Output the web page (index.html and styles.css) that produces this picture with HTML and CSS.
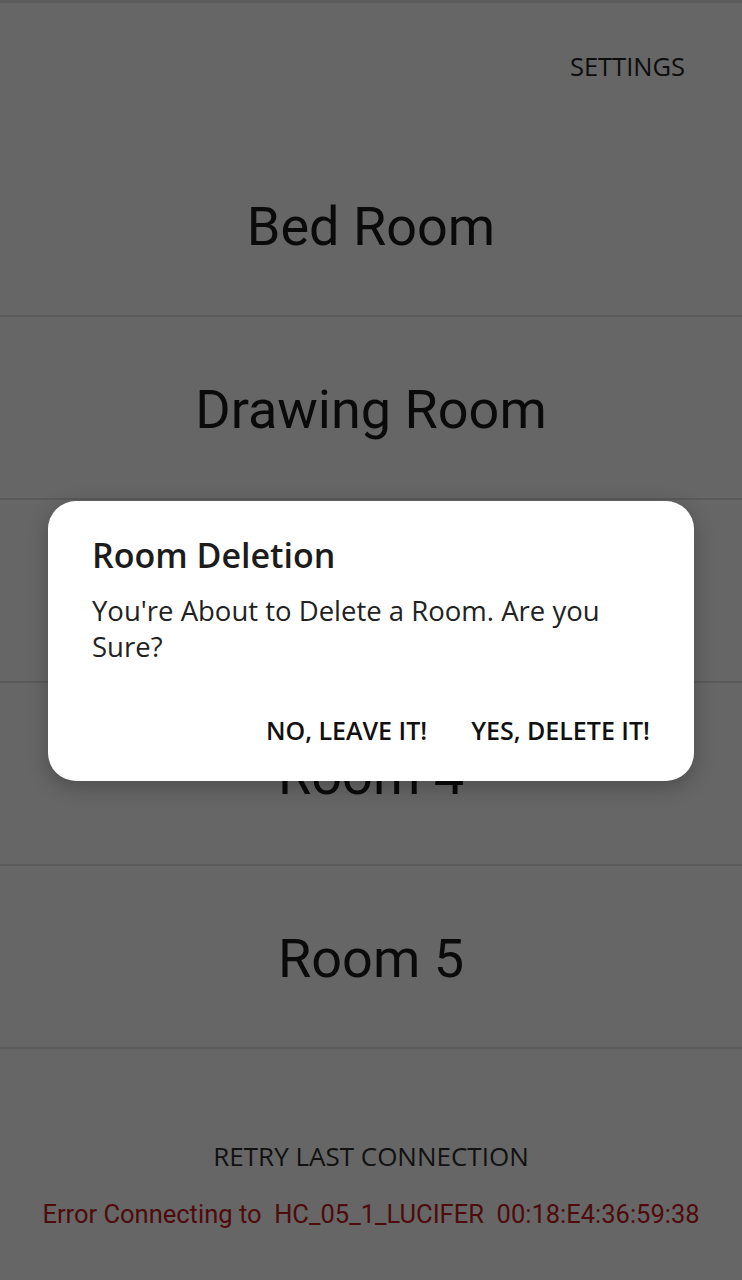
FILE: index.html
```html
<!DOCTYPE html>
<html>
<head>
<meta charset="utf-8">
<link rel="stylesheet" href="styles.css">
</head>
<body>
<div class="screen">
  <header class="top">
    <span class="settings">SETTINGS</span>
  </header>
  <ul class="rooms">
    <li class="room">Bed Room</li>
    <li class="room">Drawing Room</li>
    <li class="room">Room 3</li>
    <li class="room">Room 4</li>
    <li class="room">Room 5</li>
  </ul>
  <footer class="foot">
    <div class="retry">RETRY LAST CONNECTION</div>
    <div class="error">Error Connecting to&nbsp; HC_05_1_LUCIFER&nbsp; 00:18:E4:36:59:38</div>
  </footer>
  <div class="dialog">
    <h2 class="dlg-title">Room Deletion</h2>
    <p class="dlg-body">You're About to Delete a Room. Are you Sure?</p>
    <div class="dlg-actions">
      <span class="btn">NO, LEAVE IT!</span>
      <span class="btn">YES, DELETE IT!</span>
    </div>
  </div>
</div>
</body>
</html>
```
FILE: styles.css
```css
* { box-sizing: border-box; }
html, body { margin: 0; padding: 0; }
body {
  background: #666666;
  width: 742px;
  height: 1280px;
  overflow: hidden;
}
.screen {
  position: relative;
  width: 742px;
  height: 1280px;
  border-top: 3px solid #5d5d5d;
}
.top {
  height: 131px;
  display: flex;
  justify-content: flex-end;
  align-items: flex-start;
  padding: 48px 57px 0 0;
}
.settings {
  font-family: "Open Sans", sans-serif;
  font-size: 25.5px;
  font-weight: 400;
  color: #0d0d0d;
  line-height: 30px;
}
.rooms {
  list-style: none;
  margin: 0;
  padding: 0;
}
.room {
  height: 183px;
  border-bottom: 2px solid #5a5a5a;
  display: flex;
  align-items: center;
  justify-content: center;
  font-family: Roboto, sans-serif;
  font-size: 54px;
  color: #0a0a0a;
  padding-top: 3px;
}
.foot {
  display: flex;
  flex-direction: column;
  align-items: center;
  padding-top: 91px;
}
.retry {
  font-family: "Open Sans", sans-serif;
  font-size: 26px;
  font-weight: 400;
  color: #111;
  line-height: 32px;
}
.error {
  margin-top: 26px;
  font-family: Roboto, sans-serif;
  font-size: 25.5px;
  color: #4e0b0b;
  line-height: 32px;
  white-space: nowrap;
}
.dialog {
  position: absolute;
  left: 48px;
  top: 498px;
  width: 646px;
  height: 280px;
  background: #ffffff;
  border-radius: 28px;
  box-shadow: 0 6px 20px rgba(0,0,0,0.25);
  padding: 32px 44px 0 44px;
  display: flex;
  flex-direction: column;
}
.dlg-title {
  margin: 0;
  font-family: "Open Sans", sans-serif;
  font-size: 34px;
  font-weight: 600;
  color: #1c1c1c;
  line-height: 44px;
}
.dlg-body {
  margin: 16px 0 0 0;
  font-family: "Open Sans", sans-serif;
  font-size: 27.5px;
  color: #222;
  line-height: 36px;
}
.dlg-actions {
  margin-top: 50px;
  display: flex;
  justify-content: flex-end;
  gap: 44px;
}
.btn {
  font-family: "Open Sans", sans-serif;
  font-size: 25px;
  font-weight: 600;
  color: #111;
  line-height: 30px;
}
```
